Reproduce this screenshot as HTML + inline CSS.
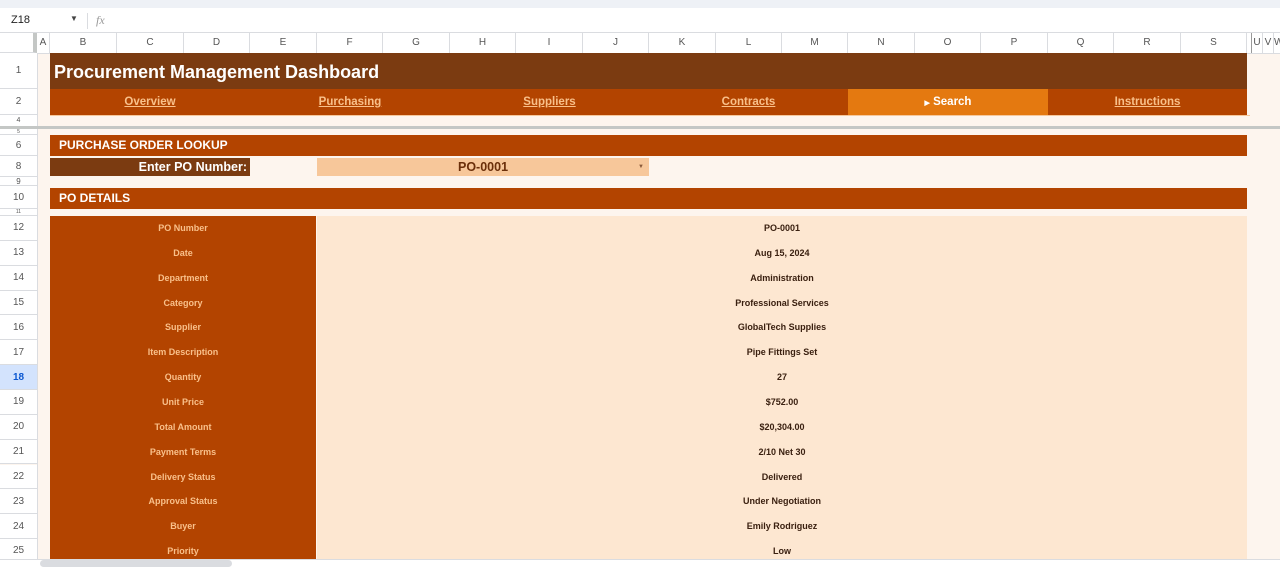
<!DOCTYPE html>
<html><head><style>
*{margin:0;padding:0;box-sizing:border-box}
body{width:1280px;height:569px;overflow:hidden;background:#fdf5ee;font-family:"Liberation Sans",sans-serif;position:relative}
.a{position:absolute}
.ch{position:absolute;top:33px;height:20px;font-size:10px;color:#555;text-align:center;line-height:20px;border-right:1px solid #dadce0;background:#fff}
.rh{position:absolute;left:0;width:37px;font-size:10px;color:#555;text-align:center;border-bottom:1px solid #dadce0;background:#fff;display:flex;align-items:center;justify-content:center}
.lbl{position:absolute;left:50px;width:266px;text-align:center;font-size:9px;font-weight:bold;color:#f9c08a}
.val{position:absolute;left:317px;width:930px;text-align:center;font-size:9px;font-weight:bold;color:#3a2010}
.nav{position:absolute;top:89px;height:26px;line-height:27px;text-align:center;font-size:11.5px;font-weight:bold;color:#f9c08a;text-decoration:underline}
</style></head><body>
<div class="a" style="left:0;top:0;width:1280px;height:8px;background:#eef1f6"></div>
<div class="a" style="left:0;top:8px;width:1280px;height:25px;background:#fff;border-bottom:1px solid #dadce0"></div>
<div class="a" style="left:11px;top:14px;font-size:11px;color:#222">Z18</div>
<div class="a" style="left:70px;top:14px;font-size:8px;color:#444">▼</div>
<div class="a" style="left:87px;top:13px;width:1px;height:16px;background:#dadce0"></div>
<div class="a" style="left:96px;top:13px;font-size:12px;color:#999;font-style:italic;font-family:'Liberation Serif',serif">fx</div>
<div class="a" style="left:0;top:33px;width:37px;height:20px;background:#fff;border-right:4px solid #c4c7c5;border-bottom:1px solid #dadce0"></div>
<div class="ch" style="left:37px;width:13px">A</div>
<div class="ch" style="left:50px;width:67px">B</div>
<div class="ch" style="left:117px;width:67px">C</div>
<div class="ch" style="left:184px;width:66px">D</div>
<div class="ch" style="left:250px;width:67px">E</div>
<div class="ch" style="left:317px;width:66px">F</div>
<div class="ch" style="left:383px;width:67px">G</div>
<div class="ch" style="left:450px;width:66px">H</div>
<div class="ch" style="left:516px;width:67px">I</div>
<div class="ch" style="left:583px;width:66px">J</div>
<div class="ch" style="left:649px;width:67px">K</div>
<div class="ch" style="left:716px;width:66px">L</div>
<div class="ch" style="left:782px;width:66px">M</div>
<div class="ch" style="left:848px;width:67px">N</div>
<div class="ch" style="left:915px;width:66px">O</div>
<div class="ch" style="left:981px;width:67px">P</div>
<div class="ch" style="left:1048px;width:66px">Q</div>
<div class="ch" style="left:1114px;width:67px">R</div>
<div class="ch" style="left:1181px;width:66px">S</div>
<div class="ch" style="left:1247px;width:5px;border-right:1px solid #999"></div>
<div class="ch" style="left:1252px;width:11px">U</div>
<div class="ch" style="left:1263px;width:11px">V</div>
<div class="ch" style="left:1274px;width:6px;border:none">W</div>
<div class="a" style="left:0;top:53px;width:1280px;height:1px;background:#dadce0"></div>
<!-- row headers -->
<div class="rh" style="top:53px;height:36px">1</div>
<div class="rh" style="top:89px;height:26px">2</div>
<div class="rh" style="top:115px;height:12px;font-size:7px">4</div>
<div class="rh" style="top:129px;height:6px;font-size:5px">5</div>
<div class="rh" style="top:135px;height:21px">6</div>
<div class="rh" style="top:156px;height:21px">8</div>
<div class="rh" style="top:177px;height:9px;font-size:8px">9</div>
<div class="rh" style="top:186px;height:23px">10</div>
<div class="rh" style="top:209px;height:7px;font-size:5px">11</div>
<div class="a" style="left:37px;top:53px;width:1px;height:506px;background:#dadce0"></div>
<!-- freeze line -->
<div class="a" style="left:0;top:126px;width:1280px;height:3px;background:#c4c7c5"></div>
<!-- title -->
<div class="a" style="left:50px;top:53px;width:1197px;height:36px;background:#7b3b11;color:#fff;font-size:18px;font-weight:bold;line-height:38px;padding-left:4px">Procurement Management Dashboard</div>
<div class="a" style="left:50px;top:89px;width:1197px;height:26px;background:#b34400"></div>
<div class="nav" style="left:50px;width:200px">Overview</div>
<div class="nav" style="left:250px;width:200px">Purchasing</div>
<div class="nav" style="left:450px;width:199px">Suppliers</div>
<div class="nav" style="left:649px;width:199px">Contracts</div>
<div class="nav" style="left:848px;width:200px;background:#e47910;color:#fff;text-decoration:none"><span style="font-size:7px">▶</span> Search</div>
<div class="nav" style="left:1048px;width:199px">Instructions</div>
<div class="a" style="left:50px;top:115px;width:1200px;height:1px;background:#f6c89c"></div>
<!-- lookup -->
<div class="a" style="left:50px;top:135px;width:1197px;height:21px;background:#b34400;color:#fff;font-size:12px;font-weight:bold;line-height:21px;padding-left:9px">PURCHASE ORDER LOOKUP</div>
<div class="a" style="left:50px;top:158px;width:200px;height:18px;background:#7b3b11;color:#fff;font-size:12.5px;font-weight:bold;line-height:18px;text-align:right;padding-right:3px">Enter PO Number:</div>
<div class="a" style="left:317px;top:158px;width:332px;height:18px;background:#f7c79a;color:#6b2f0a;font-size:12.5px;font-weight:bold;line-height:18px;text-align:center">PO-0001<span style="position:absolute;right:5px;top:0;font-size:6px;color:#8a5a3a">▼</span></div>
<div class="a" style="left:50px;top:188px;width:1197px;height:21px;background:#b34400;color:#fff;font-size:12px;font-weight:bold;line-height:21px;padding-left:9px">PO DETAILS</div>
<!-- details -->
<div class="a" style="left:50px;top:216px;width:266px;height:343px;background:#b34400"></div>
<div class="a" style="left:317px;top:216px;width:930px;height:343px;background:#fde7d1"></div>
<div id="rows"></div>
<script>
var L=["PO Number","Date","Department","Category","Supplier","Item Description","Quantity","Unit Price","Total Amount","Payment Terms","Delivery Status","Approval Status","Buyer","Priority"];
var V=["PO-0001","Aug 15, 2024","Administration","Professional Services","GlobalTech Supplies","Pipe Fittings Set","27","$752.00","$20,304.00","2/10 Net 30","Delivered","Under Negotiation","Emily Rodriguez","Low"];
var h="";
for(var i=0;i<14;i++){var t=216+i*24.85;var n=12+i;
var st=n==18?"background:#d3e3fd;color:#0b57d0;font-weight:bold;":"";
h+='<div class="rh" style="top:'+t+'px;height:24.85px;'+st+'">'+n+'</div>';
h+='<div class="lbl" style="top:'+(t+7)+'px">'+L[i]+'</div>';
h+='<div class="val" style="top:'+(t+7)+'px">'+V[i]+'</div>';}
document.getElementById("rows").innerHTML=h;
</script>
<!-- scrollbar -->
<div class="a" style="left:0;top:559px;width:1280px;height:10px;background:#fff;border-top:1px solid #dadce0"></div>
<div class="a" style="left:40px;top:560px;width:192px;height:7px;border-radius:4px;background:#dadce0"></div>
</body></html>
